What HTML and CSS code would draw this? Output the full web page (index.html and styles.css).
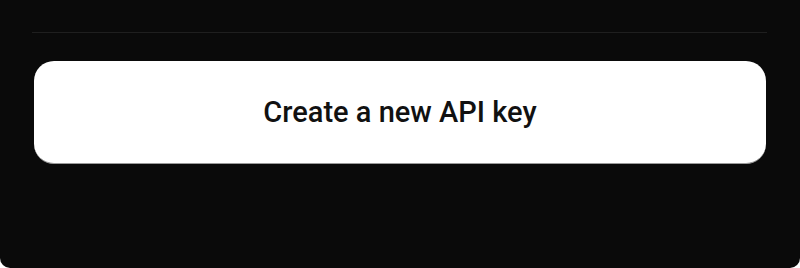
FILE: index.html
```html
<!DOCTYPE html>
<html>
<head>
	<meta charset="utf-8" />
	<link rel="stylesheet" href="styles.css">
</head>
<body>

<div class="panel">
	<div class="divider"></div>
	<div class="actions">
		<button class="create-key">Create a new API key</button>
	</div>
</div>

</body>
</html>
```

FILE: styles.css
```css
body {
	margin: 0;
	padding: 0;
	background: #ffffff;
	font-family: Roboto, "Liberation Sans", sans-serif;
}

.panel {
	height: 268px;
	box-sizing: border-box;
	background: #0a0a0a;
	border-radius: 0 0 10px 10px;
	padding: 32px 32px 0 32px;
}

.divider {
	height: 1px;
	background: #1f1f1f;
	margin-right: 1px;
}

.actions {
	padding: 28px 2px 0 2px;
}

.create-key {
	display: block;
	width: 100%;
	height: 103px;
	border: none;
	border-bottom: 1px solid #9a9a9a;
	border-radius: 20px;
	background: #ffffff;
	color: #111111;
	font-family: Roboto, "Liberation Sans", sans-serif;
	font-size: 29px;
	font-weight: 500;
	cursor: pointer;
}
```
